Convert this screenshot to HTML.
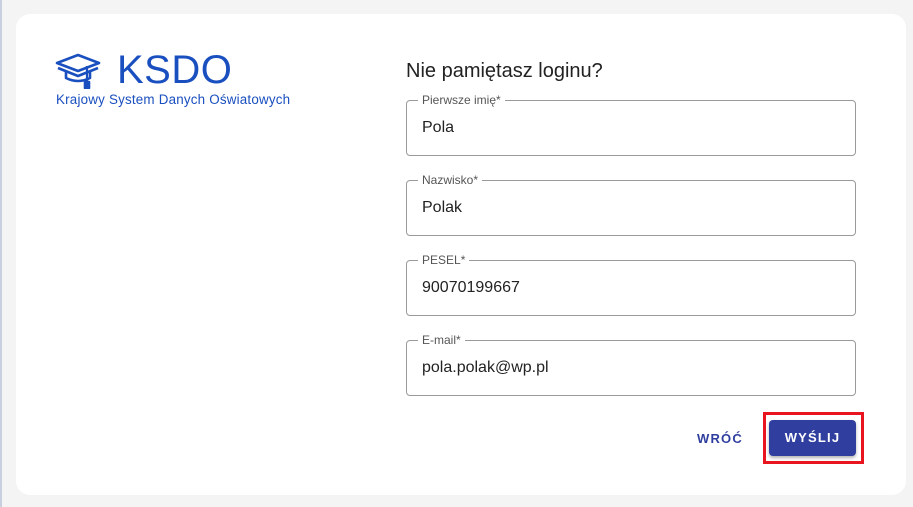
<!DOCTYPE html>
<html><head><meta charset="utf-8"><style>
body{margin:0;width:913px;height:507px;background:#f4f4f4;font-family:"Liberation Sans",Arial,sans-serif;position:relative;overflow:hidden}
.edge{position:absolute;left:0;top:0;width:2px;height:507px;background:#c8cfe0}
.card{position:absolute;left:16px;top:14px;width:890px;height:481px;background:#fff;border-radius:14px}
.ksdo{position:absolute;left:117px;top:48px;font-size:40px;color:#1a4fbf;letter-spacing:0.5px}
.sub{position:absolute;left:56px;top:92px;font-size:13.4px;color:#1a4fbf;letter-spacing:0.2px}
h2{position:absolute;left:406px;top:60px;margin:0;font-weight:normal;font-size:20px;color:#222}
.f{position:absolute;left:406px;width:448px;height:54px;border:1px solid #9a9a9a;border-radius:4px}
.f span{position:absolute;top:-8px;left:11px;background:#fff;padding:0 4px;font-size:12px;color:#555}
.f div{position:absolute;left:15px;top:18px;font-size:16px;color:#222}
.back{position:absolute;left:697px;top:431px;font-size:13px;font-weight:bold;color:#303f9f;letter-spacing:1.2px}
.red{position:absolute;left:763px;top:412px;width:95px;height:46px;border:3px solid #e8141e}
.btn{position:absolute;left:769px;top:420px;width:87px;height:36px;background:#303f9f;border-radius:4px;color:#fff;font-size:13px;font-weight:bold;letter-spacing:1.2px;text-align:center;line-height:36px;box-shadow:0 2px 3px rgba(0,0,0,.3)}
</style></head><body>
<div class="edge"></div>
<div class="card"></div>
<svg style="position:absolute;left:55px;top:53px" width="48" height="36" viewBox="0 0 48 36" fill="none" stroke="#1a4fbf" stroke-width="2.6" stroke-linejoin="round">
<path d="M2 10 L23 2 L44 10 L23 18 Z"/><path d="M3 15 L23 23 L43 15"/><path d="M11 19 V25 Q23 31 35 25 V19"/><path d="M32 13 V30" stroke-width="2.2"/><path d="M30 29 h4 v6 h-4z" fill="#1a4fbf"/>
</svg>
<div class="ksdo">KSDO</div>
<div class="sub">Krajowy System Danych Oświatowych</div>
<h2>Nie pamiętasz loginu?</h2>
<div class="f" style="top:100px"><span>Pierwsze imię*</span><div>Pola</div></div>
<div class="f" style="top:180px"><span>Nazwisko*</span><div>Polak</div></div>
<div class="f" style="top:260px"><span>PESEL*</span><div>90070199667</div></div>
<div class="f" style="top:340px"><span>E-mail*</span><div>pola.polak@wp.pl</div></div>
<div class="back">WRÓĆ</div>
<div class="red"></div>
<div class="btn">WYŚLIJ</div>
</body></html>
